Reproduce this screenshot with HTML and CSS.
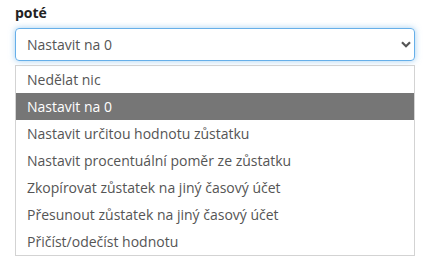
FILE: index.html
```html
<!DOCTYPE html>
<html lang="cs">
<head>
<meta charset="utf-8">
<link rel="stylesheet" href="styles.css">
</head>
<body>
<div class="field">
  <label class="label">poté</label>
  <div class="select">
    <span class="select-value">Nastavit na 0</span>
    <svg class="chevron" width="10" height="7" viewBox="0 0 10 7"><path d="M1 1.2 L5 5.2 L9 1.2" fill="none" stroke="#555" stroke-width="2.2"/></svg>
  </div>
  <ul class="options">
    <li class="option">Nedělat nic</li>
    <li class="option selected">Nastavit na 0</li>
    <li class="option">Nastavit určitou hodnotu zůstatku</li>
    <li class="option">Nastavit procentuální poměr ze zůstatku</li>
    <li class="option">Zkopírovat zůstatek na jiný časový účet</li>
    <li class="option">Přesunout zůstatek na jiný časový účet</li>
    <li class="option">Přičíst/odečíst hodnotu</li>
  </ul>
</div>
</body>
</html>
```
FILE: styles.css
```css
html, body {
  margin: 0;
  padding: 0;
  background: #fff;
}
body {
  font-family: "Open Sans", "Liberation Sans", sans-serif;
  font-size: 14px;
  color: #555;
}
.field {
  display: flex;
  flex-direction: column;
  padding: 2px 11px 0 15px;
}
.label {
  font-weight: 700;
  color: #222;
  line-height: 21px;
  margin-bottom: 5px;
}
.select {
  box-sizing: border-box;
  height: 33px;
  border: 1px solid #66afe9;
  border-radius: 4px;
  box-shadow: 0 0 6px rgba(102, 175, 233, 0.6);
  display: flex;
  align-items: center;
  justify-content: space-between;
  padding: 0 3px 0 11px;
  color: #555;
}
.chevron {
  display: block;
}
.options {
  list-style: none;
  margin: 4px 0 0;
  padding: 0;
  border: 1px solid #d3d3d3;
}
.option {
  height: 27px;
  line-height: 27px;
  padding-left: 11px;
  color: #555;
  white-space: nowrap;
}
.option.selected {
  background: #767676;
  color: #fff;
}
```
